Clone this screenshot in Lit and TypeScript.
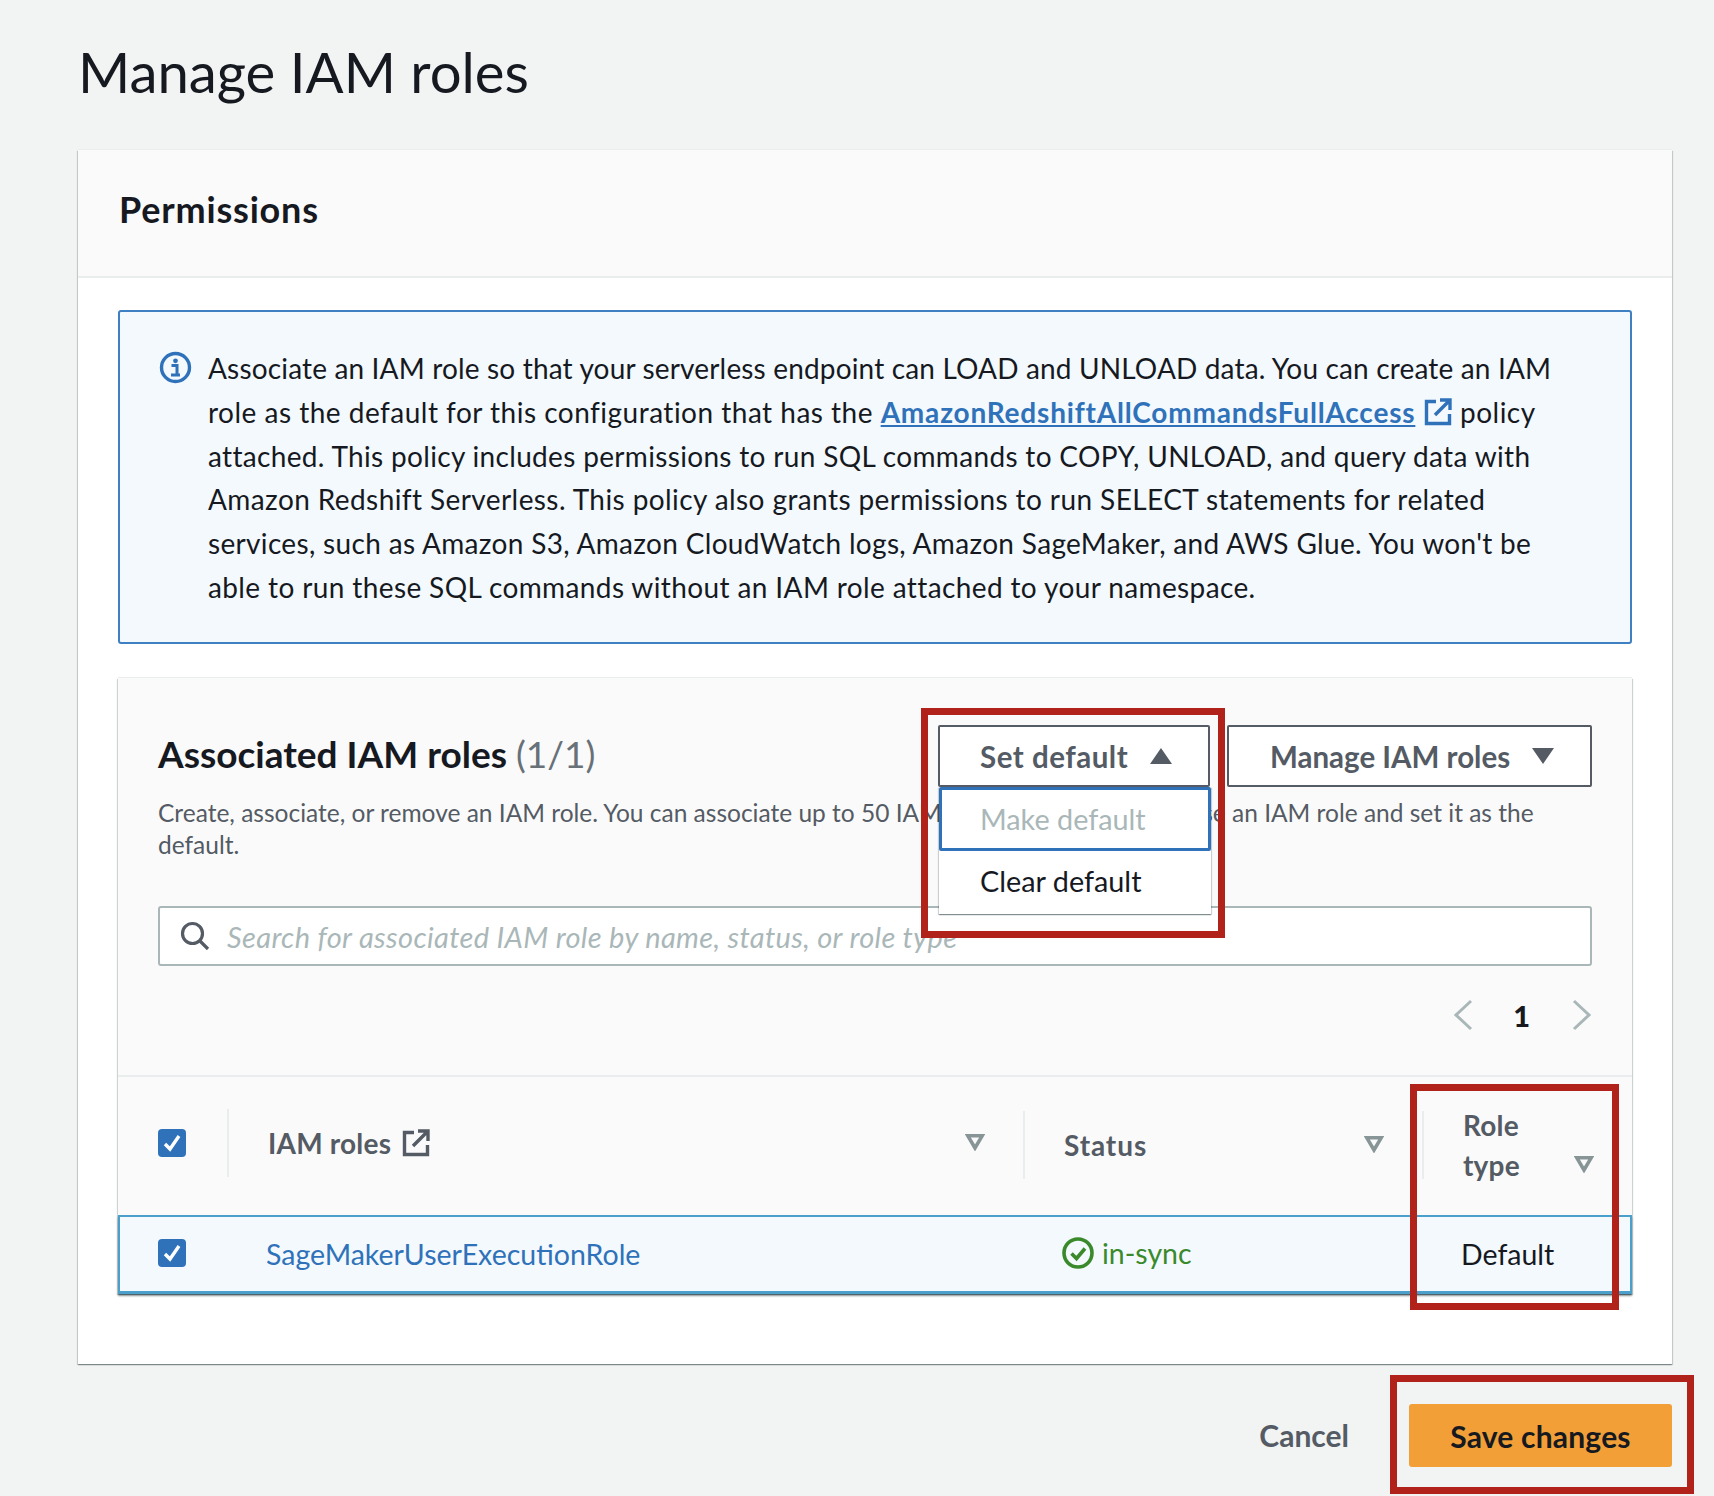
import { LitElement, html, css } from "lit";
import { customElement } from "lit/decorators.js";

const ext = (c: string, s: number) => html`<svg class="ext" width=${s} height=${s} viewBox="0 0 28 28" fill="none" stroke=${c} stroke-width="3.4"><path d="M12 3.5H2.5v22h23V16"/><path d="M11 17 25 3M16 2h10v10" /></svg>`;
const caret = (up: boolean) => html`<svg width="22" height="16" viewBox="0 0 22 16"><path fill="#545b64" d=${up ? "M11 0 22 16H0z" : "M0 0H22L11 16z"}/></svg>`;
const filter = html`<svg width="20" height="17" viewBox="0 0 20 17" fill="none" stroke="#879596" stroke-width="3.6"><path d="M2.8 1.8h14.4L10 14z"/></svg>`;
const check = html`<span class="cb"><svg width="20" height="20" viewBox="0 0 20 20" fill="none" stroke="#fff" stroke-width="3.4"><path d="M3 11l5 5 9-13"/></svg></span>`;

@customElement("app-root")
export class AppRoot extends LitElement {
  static styles = css`
    :host { display: block; position: relative; width: 1714px; height: 1496px; overflow: hidden; background: #f2f3f3; color: #16191f; font-family: Lato, "Liberation Sans", sans-serif; box-sizing: border-box; padding: 0 42px 0 78px; }
    * { box-sizing: border-box; }
    h1 { margin: 0; height: 150px; padding-top: 37px; font-size: 56.3px; line-height: 68px; font-weight: 400; }
    .card { height: 1214px; background: #fff; box-shadow: 0 -1px 0 #eaeded, 0 1px 1px 0 rgba(0,28,36,.3), 1px 1px 1px 0 rgba(0,28,36,.15), -1px 1px 1px 0 rgba(0,28,36,.15); }
    .card-h { height: 128px; background: #fafafa; border-bottom: 2px solid #eaeded; padding: 36px 0 0 41px; font-size: 36px; line-height: 46px; font-weight: 700; letter-spacing: 0.8px; }
    .card-b { padding: 32px 40px 0 40px; }
    .alert { height: 334px; background: #f3f9fd; border: 2px solid #3f80c2; border-radius: 3px; padding: 35px 40px 0 39px; display: flex; gap: 16px; font-size: 28px; line-height: 43.8px; letter-spacing: 0.33px; white-space: nowrap; }
    .alert svg.info { flex: none; margin-top: 4px; }
    .alert a { color: #2f72ba; font-weight: 700; text-decoration: underline; letter-spacing: 0.8px; }
    .alert .ext { vertical-align: -3px; margin-left: 9px; }
    .l1 { letter-spacing: 0.16px; }
    .l2 { letter-spacing: 0.49px; }
    .l4 { letter-spacing: 0.41px; }
    .l6 { letter-spacing: 0.38px; }
    .panel { margin-top: 34px; height: 616px; background: #fafafa; box-shadow: 0 -1px 0 #eaeded, 0 1px 1px 0 rgba(0,28,36,.3), 1px 1px 1px 0 rgba(0,28,36,.15), -1px 1px 1px 0 rgba(0,28,36,.15); position: relative; }
    .top { height: 399px; padding: 47px 40px 0 40px; border-bottom: 2px solid #eaeded; }
    .head { display: flex; height: 62px; }
    .head h2 { margin: 0; flex: 1; font-size: 37px; line-height: 57px; font-weight: 700; }
    .head h2 span { font-weight: 400; color: #687078; }
    .btn { height: 62px; background: #fff; border: 2px solid #545b64; border-radius: 2px; color: #545b64; font-size: 29.5px; font-weight: 700; display: flex; align-items: center; gap: 22px; }
    .btn.set { width: 272px; padding-left: 40px; letter-spacing: 0.5px; }
    .btn.man { width: 365px; margin-left: 17px; padding-left: 41px; }
    .desc { margin-top: 10px; height: 64px; font-size: 24.5px; line-height: 32px; color: #545b64; white-space: nowrap; }
    .search { margin-top: 45px; height: 60px; background: #fff; border: 2px solid #aab7b8; border-radius: 3px; display: flex; align-items: center; padding-left: 20px; gap: 17px; font-size: 29px; letter-spacing: 0.35px; font-style: italic; color: #aab7b8; }
    .pager { margin-top: 29px; display: flex; align-items: center; justify-content: flex-end; height: 40px; font-size: 29px; font-weight: 700; }
    .pager b { margin: 0 42px 0 40px; }
    .thead, .row { display: grid; grid-template-columns: 109px 796px 399px 1fr; }
    .thead { height: 138px; align-items: center; color: #545b64; font-size: 28px; font-weight: 700; }
    .th { height: 68px; display: flex; align-items: center; justify-content: space-between; border-left: 2px solid #eaeded; padding: 0 38px 0 39px; margin-top: -3px; letter-spacing: 0.2px; }
    .th.iam { margin-top: -7px; }
    .th.stat .lbl { letter-spacing: 0.9px; }
    .th.first { border: 0; padding-left: 40px; margin-top: -7px; }
    .th .lbl { display: flex; align-items: center; gap: 11px; }
    .th.role .lbl { line-height: 40px; }
    .th.role svg { margin-top: 40px; }
    .cb { width: 28px; height: 28px; border-radius: 4px; background: #2f72ba; display: flex; align-items: center; justify-content: center; }
    .row { height: 79px; align-items: center; background: #f3f9fd; border: 2px solid #4a9fcb; border-bottom-width: 3px; font-size: 28.5px; box-shadow: 0 2px 2px rgba(0,28,36,.4); }
    .row > div:first-child { padding: 0 0 2px 38px; }
    .row a { color: #2f72ba; padding-left: 37px; text-decoration: none; }
    .sync { display: flex; align-items: center; gap: 8px; color: #3a8a2b; padding-left: 37px; margin-top: -2px; }
    .dft { padding-left: 37px; }
    .menu { position: absolute; left: 821px; top: 109px; width: 272px; height: 127px; background: #fff; box-shadow: 0 1px 1px rgba(0,28,36,.3), 1px 1px 1px rgba(0,28,36,.15), -1px 1px 1px rgba(0,28,36,.15); font-size: 28.8px; }
    .mi { height: 60px; padding-left: 41px; display: flex; align-items: center; }
    .mi.off { height: 64px; border: 3px solid #2f72ba; border-radius: 2px; color: #aab7b8; padding-left: 38px; }
    .foot { height: 132px; display: flex; justify-content: flex-end; align-items: flex-start; padding-top: 40px; }
    .cancel { color: #545b64; font-size: 30px; font-weight: 700; line-height: 63px; margin-right: 60px; }
    .save { width: 263px; height: 63px; background: #f29f38; border-radius: 3px; display: flex; align-items: center; justify-content: center; font-size: 30px; font-weight: 700; letter-spacing: 0.2px; }
    .mark { position: absolute; border: 7px solid #b0221a; pointer-events: none; }
    .m1 { left: 921px; top: 708px; width: 304px; height: 230px; }
    .m2 { left: 1410px; top: 1084px; width: 209px; height: 226px; }
    .m3 { left: 1390px; top: 1375px; width: 304px; height: 119px; }
  `;

  render() {
    return html`
      <h1>Manage IAM roles</h1>
      <section class="card">
        <div class="card-h">Permissions</div>
        <div class="card-b">
          <div class="alert">
            <svg class="info" width="33" height="33" viewBox="0 0 33 33" fill="none"><circle cx="16.5" cy="16.5" r="14" stroke="#2f72ba" stroke-width="3.4"/><circle cx="16.5" cy="9.8" r="2.4" fill="#2f72ba"/><path d="M12.5 14.5h5.5v9M12 24h9" stroke="#2f72ba" stroke-width="3"/></svg>
            <div>
              <div class="l1">Associate an IAM role so that your serverless endpoint can LOAD and UNLOAD data. You can create an IAM</div>
              <div class="l2">role as the default for this configuration that has the <a href="#">AmazonRedshiftAllCommandsFullAccess</a>${ext("#2f72ba", 28)} policy</div>
              <div>attached. This policy includes permissions to run SQL commands to COPY, UNLOAD, and query data with</div>
              <div class="l4">Amazon Redshift Serverless. This policy also grants permissions to run SELECT statements for related</div>
              <div>services, such as Amazon S3, Amazon CloudWatch logs, Amazon SageMaker, and AWS Glue. You won't be</div>
              <div class="l6">able to run these SQL commands without an IAM role attached to your namespace.</div>
            </div>
          </div>
          <div class="panel">
            <div class="top">
              <div class="head">
                <h2>Associated IAM roles <span>(1/1)</span></h2>
                <div class="btn set">Set default ${caret(true)}</div>
                <div class="btn man">Manage IAM roles ${caret(false)}</div>
              </div>
              <div class="desc">Create, associate, or remove an IAM role. You can associate up to 50 IAM roles per account. Choose an IAM role and set it as the<br>default.</div>
              <div class="search">
                <svg width="30" height="30" viewBox="0 0 30 30" fill="none" stroke="#545b64" stroke-width="3.2"><circle cx="12.5" cy="12.5" r="10"/><path d="M19.5 19.5 28 28"/></svg>
                Search for associated IAM role by name, status, or role type
              </div>
              <div class="pager">
                <svg width="20" height="32" viewBox="0 0 20 32" fill="none" stroke="#aab7b8" stroke-width="3"><path d="M18 2 3 16l15 14"/></svg>
                <b>1</b>
                <svg width="20" height="32" viewBox="0 0 20 32" fill="none" stroke="#aab7b8" stroke-width="3"><path d="M2 2l15 14L2 30"/></svg>
              </div>
            </div>
            <div class="thead">
              <div class="th first">${check}</div>
              <div class="th iam"><span class="lbl">IAM roles ${ext("#545b64", 28)}</span>${filter}</div>
              <div class="th stat"><span class="lbl">Status</span>${filter}</div>
              <div class="th role"><span class="lbl">Role<br>type</span>${filter}</div>
            </div>
            <div class="row">
              <div>${check}</div>
              <a href="#">SageMakerUserExecutionRole</a>
              <div class="sync"><svg width="32" height="32" viewBox="0 0 32 32" fill="none" stroke="#3a8a2b" stroke-width="3.6"><circle cx="16" cy="16" r="14"/><path d="M9.5 16.5l5 5 8.5-10"/></svg>in-sync</div>
              <div class="dft">Default</div>
            </div>
            <div class="menu">
              <div class="mi off">Make default</div>
              <div class="mi">Clear default</div>
            </div>
          </div>
        </div>
      </section>
      <div class="foot">
        <div class="cancel">Cancel</div>
        <div class="save">Save changes</div>
      </div>
      <div class="mark m1"></div>
      <div class="mark m2"></div>
      <div class="mark m3"></div>
    `;
  }
}
